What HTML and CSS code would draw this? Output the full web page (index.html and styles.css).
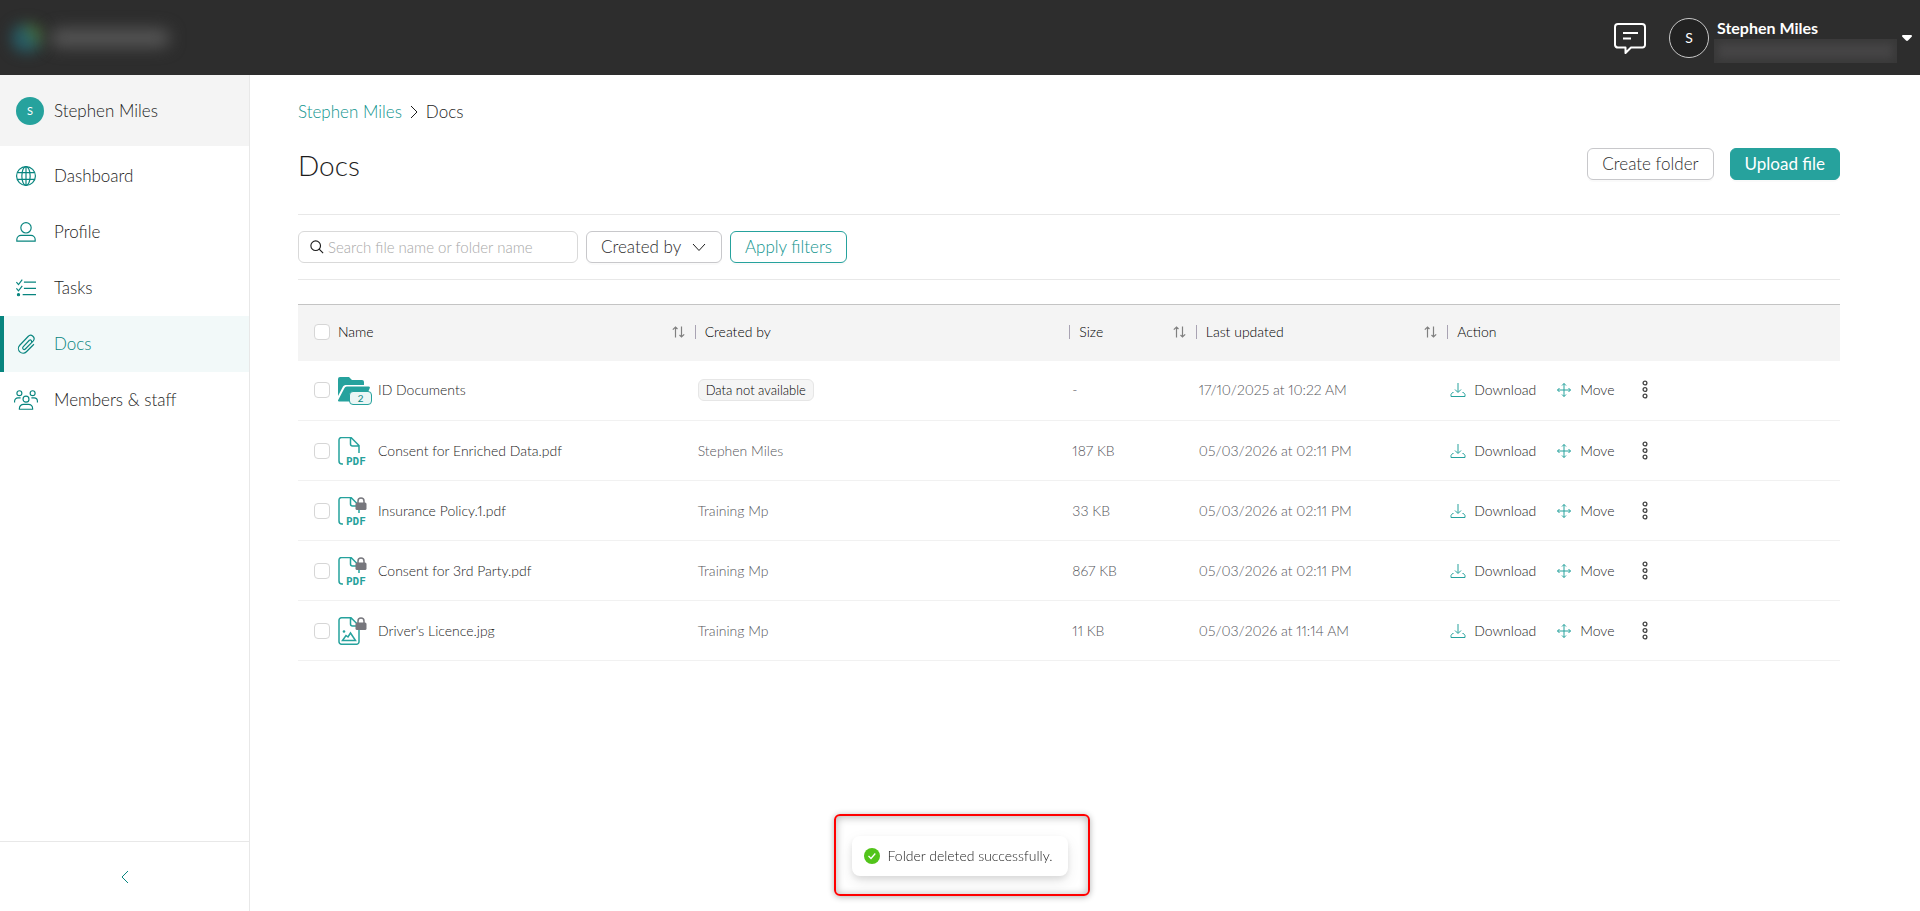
FILE: index.html
```html
<!DOCTYPE html>
<html lang="en">
<head>
<meta charset="utf-8">
<title>Docs</title>
<meta name="viewport" content="width=device-width, initial-scale=1">
<link rel="stylesheet" href="styles.css">
</head>
<body>
<svg class="sprite" aria-hidden="true">
  <symbol id="download" viewBox="0 0 16 16"><path d="M8 1v9M5 7.500l3 3 3-3M3.500 10.500H2.500L1 12.500v2h14v-2l-1.500-2h-1"/></symbol>
  <symbol id="move" viewBox="0 0 16 16"><path d="M8 1.500v13M1.500 8h13M6 3.500l2-2 2 2M6 12.500l2 2 2-2M3.500 6l-2 2 2 2M12.500 6l2 2-2 2"/></symbol>
  <symbol id="more" viewBox="0 0 8 20"><circle cx="4" cy="3" r="1.900"/><circle cx="4" cy="9.500" r="1.900"/><circle cx="4" cy="16" r="1.900"/></symbol>
  <symbol id="sort" viewBox="0 0 13 12"><path d="M3.500 11.500V1M.8 3.700L3.500 1l2 2M9.500.5V11M7.500 9l2 2 2.700-2.700"/></symbol>
  <symbol id="pdf" viewBox="0 0 28 28"><path class="line" d="M5 27H4a3 3 0 0 1-3-3V3a2.500 2.500 0 0 1 2.500-2.500H13l8 8V16M12.500 1v6a2 2 0 0 0 2 2H21"/><text class="pdf-label" x="8" y="28">PDF</text></symbol>
  <symbol id="image" viewBox="0 0 28 28"><path class="line" d="M3.500.8H13l8 8v16a2.500 2.500 0 0 1-2.500 2.500h-15A2.500 2.500 0 0 1 1 24.800V3.300A2.500 2.500 0 0 1 3.500.8zM12.500 1v6a2 2 0 0 0 2 2H21M4.500 23.500l3.500-5 2 1.500 2.500-4 5 7.500z"/><circle cx="6" cy="14.500" r="1.300"/></symbol>
  <symbol id="lock" viewBox="0 0 12 14"><path class="shackle" d="M3 6V4a3 3 0 0 1 6 0v2"/><rect x=".5" y="5.500" width="11" height="7.500" rx="1.500"/></symbol>
  <symbol id="folder" viewBox="0 0 34 28"><path d="M0 3a2 2 0 0 1 2-2h9l3 3h10a2 2 0 0 1 2 2v3H8a3 3 0 0 0-3 1.500L0 20zM1 25.500a1 1 0 0 1-.8-1.500L6.500 12A2.500 2.500 0 0 1 9 10.500h21.500a1.300 1.300 0 0 1 1.200 1.800L26 25.500z"/></symbol>
</svg>

<header class="topbar">
  <div class="brand" aria-hidden="true"><span class="brand-mark"></span><span class="brand-name"></span></div>
  <div class="account">
    <button class="icon-button chat" aria-label="Messages">
      <svg viewBox="0 0 32 32"><path d="M4 2h24a3 3 0 0 1 3 3v18a2.500 2.500 0 0 1-2.500 2.500H17L11.500 31v-5.500H4A3 3 0 0 1 1 23V5a3 3 0 0 1 3-3zM9 11h15M9 16.500h8"/></svg>
    </button>
    <span class="avatar avatar-large">S</span>
    <span class="account-text"><strong>Stephen Miles</strong><span class="account-org" aria-hidden="true"></span></span>
    <button class="icon-button caret" aria-label="Account menu"><svg viewBox="0 0 10 6"><path d="M1 0h8a1 1 0 0 1 .7 1.700L6 5.500a1.500 1.500 0 0 1-2 0L.3 1.700A1 1 0 0 1 1 0z"/></svg></button>
  </div>
</header>

<div class="shell">
  <aside class="sidebar">
    <div class="profile"><span class="avatar avatar-small">S</span><span>Stephen Miles</span></div>
    <nav class="nav">
      <a class="nav-item" href="#dashboard"><svg viewBox="0 0 24 24"><circle cx="12" cy="12" r="11.300"/><ellipse cx="12" cy="12" rx="5" ry="11.300"/><path d="M1.500 8h21M1.500 16h21M12 1v22"/></svg>Dashboard</a>
      <a class="nav-item" href="#profile"><svg viewBox="0 0 24 24"><circle cx="12" cy="7" r="6.200"/><path d="M1 23v-2a5 5 0 0 1 5-5h12a5 5 0 0 1 5 5v2z"/></svg>Profile</a>
      <a class="nav-item" href="#tasks"><svg viewBox="0 0 24 24"><path d="M9.500 5H24M9.500 12.500H24M8 20h16M.5 5l2.500 3 4.500-6M.5 12.500l2.500 3L7.500 9.500"/><circle class="solid" cx="3" cy="20" r="1.300"/></svg>Tasks</a>
      <a class="nav-item active" href="#docs" aria-current="page"><svg viewBox="0 0 24 24"><path d="M16 7.500l-7.500 8a1.800 1.800 0 0 0 2.700 2.500l9.300-9.500a4 4 0 0 0-6-5.500L4.500 13.500a5.500 5.500 0 0 0 8 7.800l9-9M16 7.500a1.800 1.800 0 0 1 2.500 2.500"/></svg>Docs</a>
      <a class="nav-item" href="#members"><svg class="wide" viewBox="0 0 29 24"><circle cx="6.500" cy="3.800" r="3"/><circle cx="22.500" cy="3.800" r="3"/><circle cx="14.500" cy="11" r="3.600"/><path d="M.7 15v-1.500a4 4 0 0 1 4-4H8M28.300 15v-1.500a4 4 0 0 0-4-4H21M6.500 23.200v-1a5 5 0 0 1 5-5h6a5 5 0 0 1 5 5v1z"/></svg>Members &amp; staff</a>
    </nav>
    <button class="collapse" aria-label="Collapse menu"><svg viewBox="0 0 8 14"><path d="M7 1L1 7l6 6"/></svg></button>
  </aside>

  <main class="content">
    <nav class="breadcrumb" aria-label="Breadcrumb">
      <a href="#member">Stephen Miles</a>
      <svg viewBox="0 0 8 14"><path d="M1 1l6 6-6 6"/></svg>
      <span>Docs</span>
    </nav>
    <div class="heading">
      <h1>Docs</h1>
      <div class="heading-actions">
        <button class="button">Create folder</button>
        <button class="button primary">Upload file</button>
      </div>
    </div>
    <form class="filters">
      <label class="search">
        <svg viewBox="0 0 16 16"><circle cx="6.500" cy="6.500" r="5.500"/><path d="M10.500 10.500L15 15"/></svg>
        <input type="text" placeholder="Search file name or folder name" aria-label="Search file name or folder name">
      </label>
      <div class="select">
        <select class="button" aria-label="Created by"><option>Created by</option></select>
        <svg viewBox="0 0 14 9"><path d="M1 1l6 6.500L13 1"/></svg>
      </div>
      <button class="button outline" type="button">Apply filters</button>
    </form>

    <table class="docs">
      <colgroup><col class="col-name"><col class="col-creator"><col class="col-size"><col class="col-updated"><col></colgroup>
      <thead>
        <tr>
          <th><div class="th"><input type="checkbox" aria-label="Select all"><span>Name</span><button class="sort" aria-label="Sort by name"><svg><use href="#sort"/></svg></button></div></th>
          <th><div class="th ruled"><span>Created by</span></div></th>
          <th><div class="th ruled"><span>Size</span><button class="sort" aria-label="Sort by size"><svg><use href="#sort"/></svg></button></div></th>
          <th><div class="th ruled"><span>Last updated</span><button class="sort" aria-label="Sort by last updated"><svg><use href="#sort"/></svg></button></div></th>
          <th><div class="th ruled"><span>Action</span></div></th>
        </tr>
      </thead>
      <tbody>
        <tr>
          <td><div class="file"><input type="checkbox" aria-label="Select ID Documents"><span class="file-icon"><svg class="folder"><use href="#folder"/></svg><span class="count">2</span></span><span>ID Documents</span></div></td>
          <td><span class="tag">Data not available</span></td>
          <td>-</td>
          <td>17/10/2025 at 10:22 AM</td>
          <td><div class="actions"><button><svg><use href="#download"/></svg>Download</button><button><svg><use href="#move"/></svg>Move</button><button class="more" aria-label="More"><svg><use href="#more"/></svg></button></div></td>
        </tr>
        <tr>
          <td><div class="file"><input type="checkbox" aria-label="Select Consent for Enriched Data.pdf"><span class="file-icon"><svg><use href="#pdf"/></svg></span><span>Consent for Enriched Data.pdf</span></div></td>
          <td>Stephen Miles</td>
          <td>187 KB</td>
          <td>05/03/2026 at 02:11 PM</td>
          <td><div class="actions"><button><svg><use href="#download"/></svg>Download</button><button><svg><use href="#move"/></svg>Move</button><button class="more" aria-label="More"><svg><use href="#more"/></svg></button></div></td>
        </tr>
        <tr>
          <td><div class="file"><input type="checkbox" aria-label="Select Insurance Policy.1.pdf"><span class="file-icon"><svg><use href="#pdf"/></svg><svg class="lock"><use href="#lock"/></svg></span><span>Insurance Policy.1.pdf</span></div></td>
          <td>Training Mp</td>
          <td>33 KB</td>
          <td>05/03/2026 at 02:11 PM</td>
          <td><div class="actions"><button><svg><use href="#download"/></svg>Download</button><button><svg><use href="#move"/></svg>Move</button><button class="more" aria-label="More"><svg><use href="#more"/></svg></button></div></td>
        </tr>
        <tr>
          <td><div class="file"><input type="checkbox" aria-label="Select Consent for 3rd Party.pdf"><span class="file-icon"><svg><use href="#pdf"/></svg><svg class="lock"><use href="#lock"/></svg></span><span>Consent for 3rd Party.pdf</span></div></td>
          <td>Training Mp</td>
          <td>867 KB</td>
          <td>05/03/2026 at 02:11 PM</td>
          <td><div class="actions"><button><svg><use href="#download"/></svg>Download</button><button><svg><use href="#move"/></svg>Move</button><button class="more" aria-label="More"><svg><use href="#more"/></svg></button></div></td>
        </tr>
        <tr>
          <td><div class="file"><input type="checkbox" aria-label="Select Driver's Licence.jpg"><span class="file-icon"><svg><use href="#image"/></svg><svg class="lock"><use href="#lock"/></svg></span><span>Driver's Licence.jpg</span></div></td>
          <td>Training Mp</td>
          <td>11 KB</td>
          <td>05/03/2026 at 11:14 AM</td>
          <td><div class="actions"><button><svg><use href="#download"/></svg>Download</button><button><svg><use href="#move"/></svg>Move</button><button class="more" aria-label="More"><svg><use href="#more"/></svg></button></div></td>
        </tr>
      </tbody>
    </table>
  </main>
</div>

<div class="toast-layer">
  <div class="toast-frame">
    <div class="toast" role="status">
      <svg viewBox="0 0 16 16"><circle cx="8" cy="8" r="8"/><path d="M4.500 8l2.500 2.500 4.300-5"/></svg>
      <span>Folder deleted successfully.</span>
    </div>
  </div>
</div>
</body>
</html>
```
FILE: styles.css
```css
:root {
  --teal: #26a29d;
  --teal-text: #10948e;
  --teal-dark: #08857f;
  --text: #1c1c1c;
  --muted: #55555b;
  --line: #e8e8e8;
}

* { box-sizing: border-box; }

body {
  margin: 0;
  min-height: 100vh;
  display: flex;
  flex-direction: column;
  font: 300 17px/24px Lato, "Open Sans", sans-serif;
  font-variant-numeric: proportional-nums;
  color: var(--text);
  background: #fff;
}

button, input, select { font: inherit; color: inherit; }
button { padding: 0; border: 0; background: none; cursor: pointer; }
a { color: inherit; text-decoration: none; }
svg { display: block; flex: none; fill: none; stroke: currentColor; }
.sprite { display: none; }

/* Top bar */
.topbar {
  height: 75px;
  padding: 0 8px 0 12px;
  display: flex;
  align-items: center;
  justify-content: space-between;
  background: #2d2d2d;
  color: #fff;
}
.brand { display: flex; align-items: center; gap: 8px; }
.brand-mark {
  width: 30px;
  height: 28px;
  border-radius: 12px;
  background: linear-gradient(55deg, #275c66 50%, #4a7038 75%);
  filter: blur(7px);
}
.brand-name {
  width: 120px;
  height: 18px;
  border-radius: 9px;
  background: #575757;
  filter: blur(8px);
}
.account { display: flex; align-items: center; }
.icon-button svg { width: 100%; height: 100%; }
.chat { width: 32px; height: 32px; margin-right: 23px; }
.chat svg { stroke-width: 2; stroke-linejoin: round; }
.avatar {
  display: grid;
  place-items: center;
  border-radius: 50%;
  color: #fff;
  font-weight: 400;
}
.avatar-large {
  width: 40px;
  height: 40px;
  border: 1px solid #c8c8c8;
  background: #222;
  font-size: 14px;
}
.account-text { display: grid; margin: 0 5px; padding-top: 4px; }
.account-text strong { padding-left: 3px; font-size: 16px; font-weight: 700; line-height: 22px; }
.account-org {
  width: 183px;
  height: 24px;
  background: #464546;
  box-shadow: inset 0 0 8px 4px #383838;
}
.caret { width: 10px; height: 6px; }
.caret svg { fill: #fff; stroke: none; }

/* Side bar */
.shell { flex: 1; display: flex; }
.sidebar {
  width: 250px;
  flex: none;
  display: flex;
  flex-direction: column;
  border-right: 1px solid var(--line);
}
.profile {
  height: 71px;
  padding-left: 16px;
  display: flex;
  align-items: center;
  gap: 10px;
  background: #f4f4f4;
}
.avatar-small { width: 28px; height: 28px; background: var(--teal); font-size: 11px; }
.nav { flex: 1; padding-top: 2px; }
.nav-item {
  height: 56px;
  padding-left: 12px;
  display: flex;
  align-items: center;
  gap: 18px;
  border-left: 4px solid transparent;
}
.nav-item svg { width: 20px; height: 20px; overflow: visible; color: var(--teal-dark); stroke-width: 1.4; }
.nav-item svg.wide { width: 24px; margin: 0 -2px; }
.nav-item .solid { fill: currentColor; }
.nav-item.active { border-left-color: var(--teal-dark); background: #f2f9f9; color: var(--teal-dark); }
.collapse {
  height: 70px;
  display: grid;
  place-items: center;
  border-top: 1px solid var(--line);
  color: var(--teal-dark);
}
.collapse svg { width: 8px; height: 14px; }

/* Page */
.content { flex: 1; min-width: 0; padding: 25px 80px 0 48px; }
.breadcrumb { display: flex; align-items: center; gap: 8px; }
.breadcrumb a { color: var(--teal-text); }
.breadcrumb svg { width: 8px; height: 14px; }
.heading {
  height: 90px;
  padding-bottom: 8px;
  display: flex;
  align-items: center;
  justify-content: space-between;
}
h1 { margin: 0; font-size: 28px; line-height: 36px; font-weight: 300; }
.heading-actions { display: flex; gap: 16px; padding-bottom: 2px; }
.button {
  height: 32px;
  padding: 0 14px;
  border: 1px solid #c8c8cb;
  border-radius: 6px;
  background: #fff;
  color: #2c2c2c;
  box-shadow: 0 2px 0 rgba(0, 0, 0, .02);
}
.button.primary { border-color: var(--teal); background: var(--teal); color: #fff; font-weight: 400; }
.button.outline { border-color: var(--teal); color: var(--teal-text); }
.filters {
  padding: 16px 0;
  display: flex;
  gap: 8px;
  border-top: 1px solid var(--line);
  border-bottom: 1px solid var(--line);
}
.search {
  width: 280px;
  height: 32px;
  padding: 0 11px;
  display: flex;
  align-items: center;
  gap: 4px;
  border: 1px solid #d9d9d9;
  border-radius: 6px;
}
.search svg { width: 14px; height: 14px; stroke-width: 1.3; }
.search input { flex: 1; min-width: 0; padding: 0; border: 0; outline: 0; background: none; font-size: 15px; }
.search input::placeholder { color: #a8a8a8; }
.select { position: relative; }
.select select { width: 136px; appearance: none; }
.select svg { position: absolute; top: 12px; right: 16px; width: 14px; height: 9px; pointer-events: none; }

/* Table */
.docs {
  width: 100%;
  margin-top: 24px;
  border-collapse: collapse;
  table-layout: fixed;
  font-size: 14px;
  line-height: 20px;
}
.col-name { width: 25.4%; }
.col-creator { width: 24.3%; }
.col-size { width: 8.2%; }
.col-updated { width: 16.3%; }
th, td { padding: 0 8px; text-align: left; font-weight: 300; }
th { height: 56px; padding: 0 5px 2px 8px; border-top: 1px solid #c4c4c4; background: #f4f4f4; color: #000; }
td { height: 60px; border-bottom: 1px solid #f1f1f1; color: var(--muted); }
th:first-child, td:first-child { padding-left: 16px; }
.th { display: flex; align-items: center; gap: 8px; }
.ruled { gap: 0; margin-left: -3px; }
.ruled::before { content: ""; width: 1px; height: 14px; margin-right: 9px; background: #a9a3b3; }
.sort { margin-left: auto; color: #808080; }
.sort svg { width: 13px; height: 12px; stroke-width: 1.2; }
input[type="checkbox"] {
  appearance: none;
  width: 16px;
  height: 16px;
  margin: 0;
  flex: none;
  border: 1px solid #d6d6d6;
  border-radius: 4px;
  background: #fff;
}
.file { display: flex; align-items: center; gap: 8px; color: var(--text); }
.file-icon { position: relative; width: 32px; height: 28px; color: var(--teal); }
.file-icon svg { width: 28px; height: 28px; fill: currentColor; stroke: none; overflow: visible; }
.file-icon svg.folder { width: 34px; }
.line { fill: none; stroke: currentColor; stroke-width: 1.5; }
.pdf-label { font: 700 11px "DejaVu Sans Mono", monospace; }
.file-icon .lock { position: absolute; top: 0; left: 17px; width: 12px; height: 14px; color: #77777d; }
.shackle { fill: none; stroke: currentColor; stroke-width: 1.5; }
.count {
  position: absolute;
  top: 15px;
  left: 11px;
  width: 23px;
  height: 14px;
  border: 1px solid var(--teal);
  border-radius: 4px;
  background: #ebf6f5;
  color: var(--teal-dark);
  font-size: 10px;
  font-weight: 400;
  line-height: 12px;
  text-align: center;
}
.tag {
  display: inline-block;
  padding: 0 7px;
  border: 1px solid #e6e6e6;
  border-radius: 6px;
  background: #f5f5f5;
  color: #000;
  font-size: 13px;
}
.actions { display: flex; align-items: center; gap: 20px; color: var(--text); }
.actions button { display: flex; align-items: center; gap: 8px; }
.actions svg { width: 16px; height: 16px; color: var(--teal); }
.actions .more { padding-left: 6px; }
.actions .more svg { width: 8px; height: 20px; color: #444; stroke-width: 1.3; }

/* Toast */
.toast-layer {
  position: fixed;
  right: 0;
  bottom: 15px;
  left: 0;
  padding-left: 4px;
  display: flex;
  justify-content: center;
  pointer-events: none;
}
.toast-frame {
  padding: 20px 20px 18px 16px;
  border: 2px solid #ff0000;
  border-radius: 6px;
  box-shadow: 0 1px 6px rgba(0, 0, 0, .3), inset 0 1px 8px rgba(0, 0, 0, .3);
}
.toast {
  height: 40px;
  padding: 0 16px 0 12px;
  display: flex;
  align-items: center;
  gap: 8px;
  border-radius: 8px;
  background: #fff;
  box-shadow: 0 6px 16px rgba(0, 0, 0, .08), 0 3px 6px rgba(0, 0, 0, .1);
  font-size: 14px;
}
.toast svg { width: 16px; height: 16px; fill: #52c41a; stroke: none; }
.toast path { fill: none; stroke: #fff; stroke-width: 1.3; }
```
